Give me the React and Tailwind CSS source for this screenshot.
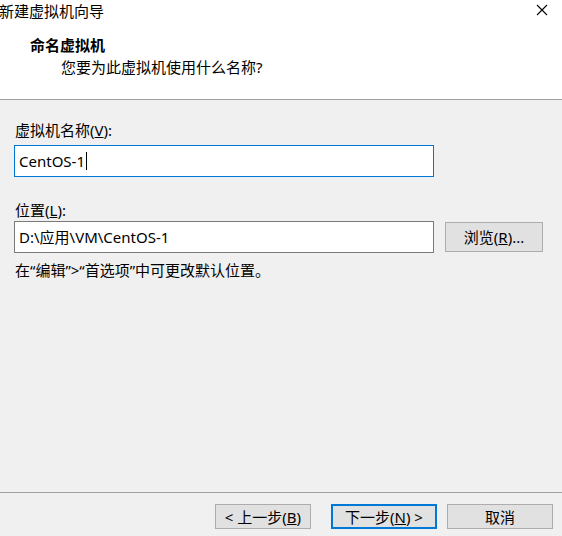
export default function App() {
  const font = { fontFamily: '"Noto Sans", "Noto Sans CJK SC", sans-serif' };

  return (
    <div
      className="w-[562px] h-[536px] bg-[#f0f0f0] flex flex-col overflow-hidden text-black text-[15px] leading-[20px]"
      style={font}
    >
      {/* Header */}
      <div className="h-[100px] shrink-0 bg-white border-b border-[#a0a0a0] flex flex-col">
        <div className="h-[22px] flex items-start justify-between">
          <span className="-ml-[1px] mt-[1px]">新建虚拟机向导</span>
          <svg width="12" height="12" viewBox="0 0 12 12" className="mt-[4px] mr-[14px]">
            <path d="M1 1 L11 11 M11 1 L1 11" stroke="#000" strokeWidth="1.1" />
          </svg>
        </div>
        <div className="pl-[30px] mt-[13px] font-bold">命名虚拟机</div>
        <div className="pl-[61px] mt-[2px]">您要为此虚拟机使用什么名称?</div>
      </div>

      {/* Body */}
      <div className="flex-1 flex flex-col px-[14px]">
        <label className="mt-[20px] pl-[1px]">
          虚拟机名称(<span className="underline">V</span>):
        </label>
        <div className="mt-[5px] w-[420px] h-[32px] bg-white border border-[#0078d7] flex items-center pl-[4px]">
          <span>CentOS-1</span>
          <span className="w-[1px] h-[18px] bg-black ml-[1px]" />
        </div>

        <label className="mt-[23px] pl-[1px]">
          位置(<span className="underline">L</span>):
        </label>
        <div className="mt-[1px] flex items-center">
          <div className="w-[420px] h-[32px] bg-white border border-[#7a7a7a] flex items-center pl-[4px]">
            D:\应用\VM\CentOS-1
          </div>
          <button className="ml-[11px] w-[98px] h-[30px] bg-[#e1e1e1] border border-[#adadad] flex items-center justify-center">
            浏览(<span className="underline">R</span>)...
          </button>
        </div>
        <div className="mt-[7px] pl-[1px]">在“编辑”&gt;“首选项”中可更改默认位置。</div>
      </div>

      {/* Footer */}
      <div className="h-[44px] shrink-0 border-t border-[#a0a0a0] flex items-start pt-[11px]">
        <button className="ml-[215px] w-[96px] h-[25px] bg-[#e1e1e1] border border-[#adadad] flex items-center justify-center">
          &lt; 上一步(<span className="underline">B</span>)
        </button>
        <button className="ml-[20px] w-[106px] h-[25px] bg-[#e1e1e1] border-2 border-[#0078d7] flex items-center justify-center">
          下一步(<span className="underline">N</span>) &gt;
        </button>
        <button className="ml-[10px] w-[106px] h-[25px] bg-[#e1e1e1] border border-[#adadad] flex items-center justify-center">
          取消
        </button>
      </div>
    </div>
  );
}
